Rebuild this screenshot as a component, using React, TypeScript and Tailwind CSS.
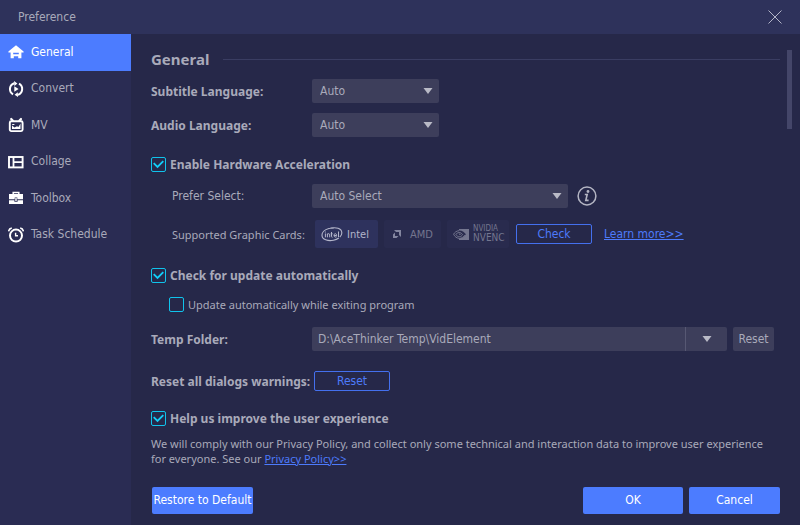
import { useState, type ReactNode } from "react";

function HomeIcon() {
  return (
    <svg viewBox="0 0 16 16" className="size-4" fill="#fff" aria-hidden="true">
      <path fillRule="evenodd" d="M8 1.300 15.600 7.500V8.500H13.4V14.200H10.2V12.300H5.8V14.200H2.6V8.500H.4V7.500ZM5.2 8.800V10.2H10.8V8.800Z" />
    </svg>
  );
}

function ConvertIcon() {
  return (
    <svg viewBox="0 0 16 16" className="size-4" fill="none" aria-hidden="true">
      <path d="M6.2 2.3A6.1 6.1 0 0 0 5 13.4M9.8 13.9A6.1 6.1 0 0 0 11 2.7" stroke="#fff" strokeWidth="2" />
      <path d="M6 0 9.4 2.4 6.4 5ZM10 16 6.6 13.8 9.8 11.200ZM6.3 5.3 10.6 8 6.3 10.7Z" fill="#fff" />
    </svg>
  );
}

function MvIcon() {
  return (
    <svg viewBox="0 0 16 16" className="size-4" fill="none" aria-hidden="true">
      <path d="M3.200 2 4.700 3.6M13 2 11.500 3.6" stroke="#fff" strokeWidth="2.200" strokeLinecap="round" />
      <rect x="1.8" y="4.200" width="12.8" height="9.900" rx="1.5" stroke="#fff" strokeWidth="1.900" />
      <path d="M4 12V8.500L6.5 10.6 9 9.300 10.400 10 12.500 6.600V12Z" fill="#fff" />
      <path d="M4.2 7.500H6.400" stroke="#fff" />
    </svg>
  );
}

function CollageIcon() {
  return (
    <svg viewBox="0 0 16 16" className="size-4" fill="none" stroke="#fff" aria-hidden="true">
      <rect x="1" y="3" width="13.6" height="10.4" strokeWidth="1.9" />
      <path d="M5.500 3V13.4M5.500 8.2H14.6" strokeWidth="1.8" />
    </svg>
  );
}

function ToolboxIcon() {
  return (
    <svg viewBox="0 0 16 16" className="size-4" aria-hidden="true">
      <path d="M5.2 4.2V2.400H10.8V4.2" stroke="#fff" strokeWidth="1.5" fill="none" />
      <path d="M1 4H15V9.300H9.3V7.500H6.7V9.300H1ZM7.3 8H8.7V11H7.3ZM1 10.200H6.4V11.800H9.6V10.200H15V14H1Z" fill="#fff" />
    </svg>
  );
}

function ClockIcon() {
  return (
    <svg viewBox="0 0 16 16" className="size-4" fill="none" stroke="#fff" aria-hidden="true">
      <circle cx="8" cy="8.6" r="6" strokeWidth="2" />
      <path d="M.6 4.4A4 4 0 0 1 3.800 1M15.400 4.4A4 4 0 0 0 12.200 1" strokeWidth="1.5" />
      <path d="M7.6 5.8V8.8H10" strokeWidth="1.4" />
    </svg>
  );
}

function IntelLogo() {
  return (
    <svg viewBox="0 0 22 15" className="h-[15px] w-[22px]" fill="none" stroke="#b4b6ca" aria-hidden="true">
      <path d="M13 1.2C7.500 .3 1 3.600 1 8.200C1 12.500 7 14.500 12.500 13.300C14.500 12.900 16.500 12 17.800 11M9 1.300C15 -.2 20.600 1.500 20.800 5.600C20.900 7.600 20 9 18.800 10" strokeWidth="1.1" />
      <path d="M4.400 6.500V10.300M6.400 10.300V6.500M6.400 7.500C7 6.400 8.700 6.400 8.700 7.800V10.300M10.500 5V9.500Q10.500 10.300 11.500 10.200M9.700 6.800H11.600M13.100 8.500H15.700C15.700 6.100 13 6.200 13 8.400C13 10.300 15 10.500 15.700 9.700M17.500 4.500V10.100M4.400 4.600V5.500" strokeWidth="1" />
    </svg>
  );
}

function AmdLogo() {
  return (
    <svg viewBox="0 0 8 8" className="size-2" fill="#8486a0" aria-hidden="true">
      <path d="M1 0H8V7L6 5V2H3ZM0 4.500 2 2.500V6H5.500L3.500 8H0Z" />
    </svg>
  );
}

function NvidiaLogo() {
  return (
    <svg viewBox="0 0 16 11" className="h-[11px] w-4 shrink-0" aria-hidden="true">
      <path d="M6 0H16V11H6Z" fill="#74768f" />
      <path d="M6 1.500C9.500 1.400 11.500 3.300 12.900 5.300C11.500 7.500 9 9.500 6 9.500Z" fill="#2a2c4e" />
      <path d="M6 1.700C3.500 1.800 1.500 3.500 .6 5.200C1.500 7.500 4 9.400 6.500 9.400C9 9.300 10.700 7.600 11.700 6.200M6 3.600C4.400 3.700 3.300 4.600 2.900 5.400C3.500 6.800 5 7.800 6.500 7.700C8 7.600 8.800 6.700 9.600 5.700C8.800 4.300 7.500 3.500 6 3.600M6 5.200C7 5 7.500 5.500 7.700 6" fill="none" stroke="#74768f" strokeWidth="1" />
    </svg>
  );
}

function InfoIcon() {
  return (
    <svg viewBox="0 0 20 20" className="size-5" aria-hidden="true">
      <circle cx="10" cy="10" r="8.900" fill="none" stroke="#b4b5c3" strokeWidth="1.500" />
      <circle cx="11" cy="5.500" r="1.400" fill="#b4b5c3" />
      <path d="M7.800 8.500H10.200L8.800 14.400H11.600" fill="none" stroke="#b4b5c3" strokeWidth="1.600" />
    </svg>
  );
}

function Triangle({ className = "" }: { className?: string }) {
  return (
    <svg viewBox="0 0 10 6" className={`h-[6px] w-[10px] ${className}`} fill="#b9bac6" aria-hidden="true">
      <path d="M.5 0H9.500L5 6Z" />
    </svg>
  );
}

const sections = [
  { name: "General", Icon: HomeIcon },
  { name: "Convert", Icon: ConvertIcon },
  { name: "MV", Icon: MvIcon },
  { name: "Collage", Icon: CollageIcon },
  { name: "Toolbox", Icon: ToolboxIcon },
  { name: "Task Schedule", Icon: ClockIcon },
];

const strong = "font-['Noto_Sans',sans-serif] font-bold";
const compact = "font-['Noto_Sans',sans-serif] text-[11px]";

function Dropdown({ id, options, width }: { id: string; options: string[]; width: string }) {
  return (
    <div className={`relative ${width}`}>
      <select id={id} className="block h-6 w-full appearance-none rounded-xs bg-[#3d3e5b] pr-6 pl-2 outline-none">
        {options.map((option) => (
          <option key={option}>{option}</option>
        ))}
      </select>
      <Triangle className="pointer-events-none absolute top-[9px] right-[6px]" />
    </div>
  );
}

function CheckRow({ label, initial, className }: { label: string; initial: boolean; className: string }) {
  const [checked, setChecked] = useState(initial);
  return (
    <label className={`flex h-[15px] items-center gap-1 ${className}`}>
      <span className="grid size-[15px] place-items-center">
        <input
          type="checkbox"
          checked={checked}
          onChange={(event) => setChecked(event.target.checked)}
          className="col-start-1 row-start-1 size-[15px] appearance-none rounded-[2px] border border-solid border-[#10c3ec]"
        />
        {checked && (
          <svg viewBox="0 0 11 9" className="pointer-events-none col-start-1 row-start-1 h-[9px] w-[11px]" fill="none" stroke="#12cdf8" strokeWidth="1.800" aria-hidden="true">
            <path d="M.7 3.200 4.500 7 10.300 1.200" />
          </svg>
        )}
      </span>
      {label}
    </label>
  );
}

function OutlineButton({ children }: { children: ReactNode }) {
  return (
    <button type="button" className="flex h-5 w-[76px] items-center justify-center rounded-xs border border-[#4470ee] text-[#4d7bfb]">
      {children}
    </button>
  );
}

export default function App() {
  const [active, setActive] = useState("General");
  const [folder, setFolder] = useState("D:\\AceThinker Temp\\VidElement");

  return (
    <div className="flex min-h-screen flex-col bg-[#262849] font-['DejaVu_Sans_Condensed','DejaVu_Sans',sans-serif] text-[12px] leading-[15px] text-[#a9aaba]">
      <header className="flex h-[34px] items-center justify-between bg-[#2e325b] pr-[18px] pl-[18px]">
        <h1>Preference</h1>
        <button type="button" aria-label="Close">
          <svg viewBox="0 0 14 14" className="size-[14px]" stroke="#b3b5c8" strokeWidth="1" aria-hidden="true">
            <path d="M.5 .5 13.500 13.500M13.500 .5 .5 13.500" />
          </svg>
        </button>
      </header>

      <div className="flex flex-1">
        <nav className="w-[131px] shrink-0 bg-[#2a2c53]">
          <div className="flex h-[219px] flex-col">
            {sections.map(({ name, Icon }) => (
              <button
                key={name}
                type="button"
                onClick={() => setActive(name)}
                className={`flex flex-1 items-center gap-[7px] pl-2 text-left ${active === name ? "bg-[#4c7cff] text-white" : ""}`}
              >
                <Icon />
                {name}
              </button>
            ))}
          </div>
        </nav>

        <main className="flex flex-1 flex-col pb-[11px] pl-5">
          <div className="flex flex-1">
            <div className="flex-1 pt-[15px] pr-[7px]">
              <div className="flex h-5 items-center gap-[14px]">
                <h2 className={`text-[15px] ${strong}`}>General</h2>
                <hr className="flex-1 border-[#3a3d62]" />
              </div>

              <div className="mt-[10px] flex items-center">
                <label htmlFor="subtitle" className={`w-[161px] ${strong}`}>Subtitle Language:</label>
                <Dropdown id="subtitle" options={["Auto", "English"]} width="w-[127px]" />
              </div>
              <div className="mt-[10px] flex items-center">
                <label htmlFor="audio" className={`w-[161px] ${strong}`}>Audio Language:</label>
                <Dropdown id="audio" options={["Auto", "English"]} width="w-[127px]" />
              </div>

              <CheckRow label="Enable Hardware Acceleration" initial className={`mt-5 ${strong}`} />
              <div className="mt-3 flex items-center">
                <label htmlFor="prefer" className="w-[161px] pl-[21px]">Prefer Select:</label>
                <Dropdown id="prefer" options={["Auto Select", "Intel", "AMD", "NVIDIA"]} width="w-64" />
                <button type="button" aria-label="About hardware acceleration" className="ml-[9px]">
                  <InfoIcon />
                </button>
              </div>
              <div className="mt-3 flex items-center">
                <span className={`w-[164px] pl-[21px] whitespace-nowrap ${compact}`}>Supported Graphic Cards:</span>
                <div className="flex gap-[6px] text-[11px] text-[#74768f]">
                  <div className="flex h-7 w-[63px] items-center gap-1 rounded-xs bg-[#2e325d] pl-[6px] text-[#b4b6ca]">
                    <IntelLogo />
                    Intel
                  </div>
                  <div className="flex h-7 w-[57px] items-center gap-[9px] rounded-xs bg-[#292b4e] pl-[9px]">
                    <AmdLogo />
                    AMD
                  </div>
                  <div className="flex h-7 w-[62px] items-center gap-1 rounded-xs bg-[#292b4e] pl-[6px]">
                    <NvidiaLogo />
                    <span className="flex flex-col">
                      <span className="text-[8px] leading-[8px]">NVIDIA</span>
                      <span className="text-[10px] leading-[10px]">NVENC</span>
                    </span>
                  </div>
                </div>
                <div className="mr-3 ml-[7px] flex">
                  <OutlineButton>Check</OutlineButton>
                </div>
                <a href="#learn" className="text-[#4d7bfb] underline">Learn more&gt;&gt;</a>
              </div>

              <CheckRow label="Check for update automatically" initial className={`mt-5 ${strong}`} />
              <CheckRow label="Update automatically while exiting program" initial={false} className={`mt-[14px] pl-[18px] ${compact}`} />

              <div className="mt-[15px] mr-[6px] flex items-center">
                <label htmlFor="folder" className={`w-[161px] ${strong}`}>Temp Folder:</label>
                <input
                  id="folder"
                  value={folder}
                  onChange={(event) => setFolder(event.target.value)}
                  className="h-6 min-w-0 flex-1 rounded-l-xs bg-[#3d3e5b] px-[6px] outline-none"
                />
                <button type="button" aria-label="Choose folder" className="flex h-6 w-[42px] items-center justify-center rounded-r-xs border-l border-[#575873] bg-[#3d3e5b]">
                  <Triangle />
                </button>
                <button type="button" className="ml-[6px] h-6 w-[41px] rounded-xs bg-[#3d3e5b]">Reset</button>
              </div>

              <div className="mt-5 flex items-center">
                <span className={`w-[163px] whitespace-nowrap ${strong}`}>Reset all dialogs warnings:</span>
                <OutlineButton>Reset</OutlineButton>
              </div>

              <CheckRow label="Help us improve the user experience" initial className={`mt-5 ${strong}`} />
              <p className={`mt-[10px] ${compact}`}>
                We will comply with our Privacy Policy, and collect only some technical and interaction data to improve user experience for everyone. See our{" "}
                <a href="#privacy" className="text-[#4d7bfb] underline">Privacy Policy&gt;&gt;</a>
              </p>
            </div>
            <div className="mt-4 mr-2 h-[79px] w-[5px] bg-[#444669]" />
          </div>

          <footer className="mr-5 ml-px flex gap-[6px] text-white">
            <button type="button" className="mr-auto h-[27px] w-[101px] rounded-xs bg-[#4c7cff] whitespace-nowrap">Restore to Default</button>
            <button type="button" className="h-[27px] w-[100px] rounded-xs bg-[#4c7cff]">OK</button>
            <button type="button" className="h-[27px] w-[91px] rounded-xs bg-[#4c7cff]">Cancel</button>
          </footer>
        </main>
      </div>
    </div>
  );
}
